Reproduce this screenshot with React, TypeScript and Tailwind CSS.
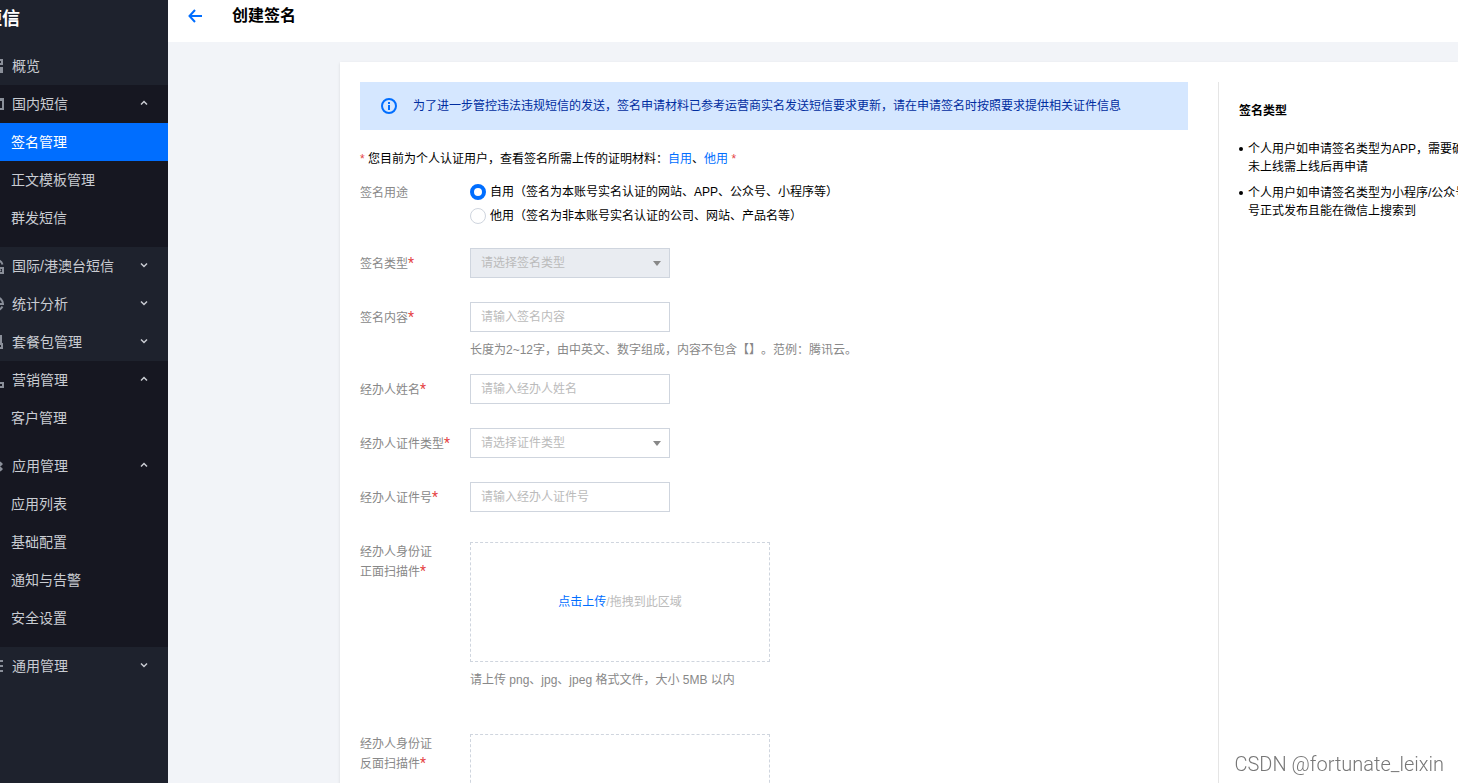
import React from 'react';

type IconName =
  | 'overview'
  | 'mail'
  | 'global'
  | 'stats'
  | 'package'
  | 'marketing'
  | 'apps'
  | 'list';

interface MenuItem {
  label: string;
  icon: IconName;
  expandable?: boolean;
  children?: { label: string; active?: boolean }[];
}

const menu: MenuItem[] = [
  { label: '概览', icon: 'overview' },
  {
    label: '国内短信',
    icon: 'mail',
    expandable: true,
    children: [
      { label: '签名管理', active: true },
      { label: '正文模板管理' },
      { label: '群发短信' },
    ],
  },
  { label: '国际/港澳台短信', icon: 'global', expandable: true },
  { label: '统计分析', icon: 'stats', expandable: true },
  { label: '套餐包管理', icon: 'package', expandable: true },
  {
    label: '营销管理',
    icon: 'marketing',
    expandable: true,
    children: [{ label: '客户管理' }],
  },
  {
    label: '应用管理',
    icon: 'apps',
    expandable: true,
    children: [
      { label: '应用列表' },
      { label: '基础配置' },
      { label: '通知与告警' },
      { label: '安全设置' },
    ],
  },
  { label: '通用管理', icon: 'list', expandable: true },
];

const iconShapes: Record<IconName, React.ReactNode> = {
  overview: (
    <>
      <path d="M2 2h4v4H2zM10 2h4v4h-4z" />
      <path d="M1 9h6v6H1zM9 9h6v6H9z" fill="currentColor" stroke="none" />
    </>
  ),
  mail: (
    <>
      <path d="M1 3h14v10H1z" />
      <path d="M1 4h14M5 8h7" />
    </>
  ),
  global: (
    <>
      <path d="M5 14A6.500 6.500 0 1 1 14.500 6.500M2 8h3" />
      <path d="M7 10h8v5H7zM9 12l2 1 2-1" />
    </>
  ),
  stats: <path d="M8 8h7A6.500 6.500 0 1 0 8 14.500c3 0 5-1.500 6.500-4" />,
  package: <path d="M2 1v7h11V1M2 11h4v4H2zM10 10h4v4h-4z" />,
  marketing: <path d="M2 2h5v5H2zM2 11h5v4H2zM10 11h5v4h-5z" />,
  apps: (
    <path
      d="M4 3l3 3-3 3-3-3zM12.500 3.500L15 6l-2.500 2.500L10 6zM12.500 8.500L15 11l-2.500 2.500L10 11zM4 9l3 3-3 3-3-3z"
      fill="currentColor"
      stroke="none"
    />
  ),
  list: <path d="M1 3h14M1 8h14M1 13h14" />,
};

const MenuIcon: React.FC<{ name: IconName }> = ({ name }) => (
  <svg
    viewBox="0 0 16 16"
    className="h-4 w-4 shrink-0 text-[#8a8f99]"
    fill="none"
    stroke="currentColor"
    strokeWidth="2"
  >
    {iconShapes[name]}
  </svg>
);

const Chevron: React.FC<{ open: boolean }> = ({ open }) => (
  <svg
    viewBox="0 0 8 8"
    className="mr-5 mb-0.5 ml-auto h-2 w-2 text-[#c9ccd2]"
    fill="none"
    stroke="currentColor"
    strokeWidth="1.5"
  >
    <path d={open ? 'M1 5.500L4 2.500l3 3' : 'M1 2.500L4 5.500l3-3'} />
  </svg>
);

const Sidebar: React.FC = () => (
  <aside className="w-[168px] shrink-0 overflow-hidden bg-[#1e222d]">
    <h2 className="-ml-4 pt-[5px] pb-3.5 text-lg leading-7 font-bold text-white">短信</h2>
    <nav className="text-sm text-[#c9ccd2]">
      {menu.map((item) => (
        <div key={item.label} className={item.children ? 'bg-[#161721] pb-2.5' : ''}>
          <button
            type="button"
            aria-expanded={item.expandable ? Boolean(item.children) : undefined}
            className="flex h-[38px] w-full items-center"
          >
            <span className="-ml-3 flex items-center gap-2">
              <MenuIcon name={item.icon} />
              {item.label}
            </span>
            {item.expandable && <Chevron open={Boolean(item.children)} />}
          </button>
          {item.children?.map((child) => (
            <a
              key={child.label}
              href="#"
              className={
                child.active
                  ? 'flex h-[38px] items-center bg-[#006eff] pl-[11px] text-white'
                  : 'flex h-[38px] items-center pl-[11px]'
              }
            >
              {child.label}
            </a>
          ))}
        </div>
      ))}
    </nav>
  </aside>
);

const Required: React.FC = () => (
  <span className="font-['Roboto',sans-serif] text-sm leading-none text-[#e54545]">*</span>
);

interface FormRowProps {
  label: React.ReactNode;
  htmlFor: string;
  hint?: string;
  children: React.ReactNode;
}

const FormRow: React.FC<FormRowProps> = ({ label, htmlFor, hint, children }) => (
  <div className={hint ? 'mb-3.5 flex' : 'mb-6 flex'}>
    <label htmlFor={htmlFor} className="h-[30px] w-[110px] shrink-0 leading-8 text-[#888]">
      {label}
      <Required />
    </label>
    <div>
      {children}
      {hint && <p className="mt-2 leading-5 text-[#888] [text-spacing-trim:space-all]">{hint}</p>}
    </div>
  </div>
);

const TextField: React.FC<{ id: string; placeholder: string }> = ({ id, placeholder }) => (
  <input
    id={id}
    type="text"
    placeholder={placeholder}
    className="block h-[30px] w-[200px] border border-[#cfd5de] bg-white px-2.5 placeholder:text-[#bbb]"
  />
);

const SelectField: React.FC<{ id: string; placeholder: string; disabled?: boolean }> = ({
  id,
  placeholder,
  disabled = false,
}) => (
  <div className="relative w-[200px]">
    <select
      id={id}
      disabled={disabled}
      className="block h-[30px] w-full appearance-none border border-[#cfd5de] bg-white px-2.5 text-[#bbb] disabled:bg-[#e9ecf1] disabled:opacity-100"
    >
      <option>{placeholder}</option>
    </select>
    <svg
      viewBox="0 0 8 5"
      className="pointer-events-none absolute top-[13px] right-[9px] h-[5px] w-2"
      fill="#888"
    >
      <path d="M0 0h8L4 5z" />
    </svg>
  </div>
);

interface UploadRowProps {
  id: string;
  side: string;
}

const UploadRow: React.FC<UploadRowProps> = ({ id, side }) => (
  <div className="flex pt-1.5 pb-[38px]">
    <label htmlFor={id} className="w-[110px] shrink-0 leading-5 text-[#888]">
      经办人身份证
      <br />
      {side}扫描件
      <Required />
    </label>
    <div>
      <div className="flex h-[120px] w-[300px] items-center justify-center border border-dashed border-[#cfd5de] text-[#bbb]">
        <button id={id} type="button" className="text-[#006eff]">
          点击上传
        </button>
        /拖拽到此区域
      </div>
      <p className="mt-2 leading-5 text-[#888]">请上传 png、jpg、jpeg 格式文件，大小 5MB 以内</p>
    </div>
  </div>
);

const radioClass =
  'h-4 w-4 appearance-none rounded-full border border-[#cfd5de] bg-white checked:border-4 checked:border-[#006eff]';

const SignatureForm: React.FC = () => (
  <form className="w-[828px] shrink-0">
    <div className="flex h-12 items-center gap-4 bg-[#d5e7ff] pl-[21px] text-[#002da0]">
      <svg viewBox="0 0 16 16" className="h-4 w-4" fill="none" stroke="#006eff" strokeWidth="2">
        <circle cx="8" cy="8" r="7" />
        <path d="M8 7v5M8 4v2" />
      </svg>
      为了进一步管控违法违规短信的发送，签名申请材料已参考运营商实名发送短信要求更新，请在申请签名时按照要求提供相关证件信息
    </div>
    <p className="mt-5 leading-[18px]">
      <span className="text-[#e54545]">*</span> 您目前为个人认证用户，查看签名所需上传的证明材料：
      <a href="#" className="text-[#006eff]">
        自用
      </a>
      、
      <a href="#" className="text-[#006eff]">
        他用
      </a>{' '}
      <span className="text-[#e54545]">*</span>
    </p>
    <fieldset className="mt-3 mb-5 flex">
      <legend className="float-left w-[110px] leading-[26px] text-[#888]">签名用途</legend>
      <div>
        <label className="flex h-6 items-center gap-1">
          <input type="radio" name="purpose" defaultChecked className={radioClass} />
          自用（签名为本账号实名认证的网站、APP、公众号、小程序等）
        </label>
        <label className="flex h-6 items-center gap-1">
          <input type="radio" name="purpose" className={radioClass} />
          他用（签名为非本账号实名认证的公司、网站、产品名等）
        </label>
      </div>
    </fieldset>
    <FormRow label="签名类型" htmlFor="sign-type">
      <SelectField id="sign-type" placeholder="请选择签名类型" disabled />
    </FormRow>
    <FormRow
      label="签名内容"
      htmlFor="sign-content"
      hint="长度为2~12字，由中英文、数字组成，内容不包含【】。范例：腾讯云。"
    >
      <TextField id="sign-content" placeholder="请输入签名内容" />
    </FormRow>
    <FormRow label="经办人姓名" htmlFor="agent-name">
      <TextField id="agent-name" placeholder="请输入经办人姓名" />
    </FormRow>
    <FormRow label="经办人证件类型" htmlFor="id-type">
      <SelectField id="id-type" placeholder="请选择证件类型" />
    </FormRow>
    <FormRow label="经办人证件号" htmlFor="id-number">
      <TextField id="id-number" placeholder="请输入经办人证件号" />
    </FormRow>
    <UploadRow id="id-front" side="正面" />
    <UploadRow id="id-back" side="反面" />
  </form>
);

const tips = [
  ['个人用户如申请签名类型为APP，需要确', '未上线需上线后再申请'],
  ['个人用户如申请签名类型为小程序/公众号', '号正式发布且能在微信上搜索到'],
];

const TipsPanel: React.FC = () => (
  <aside className="ml-[30px] min-w-0 flex-1 overflow-hidden border-l border-[#e5e5e5] pt-5 pl-5 leading-[18px] whitespace-nowrap">
    <h3 className="mb-5 font-bold">签名类型</h3>
    <ul className="flex flex-col gap-2">
      {tips.map(([first, second]) => (
        <li key={first} className="flex gap-[5px]">
          <span className="mt-[7px] h-1 w-1 shrink-0 rounded-full bg-black" />
          <span>
            {first}
            <br />
            {second}
          </span>
        </li>
      ))}
    </ul>
  </aside>
);

export default function App() {
  return (
    <div className="flex h-screen overflow-hidden bg-[#f2f4f8] font-['Liberation_Sans','Noto_Sans_CJK_SC',sans-serif] text-xs text-black">
      <Sidebar />
      <div className="flex min-w-0 flex-1 flex-col">
        <header className="flex h-[42px] shrink-0 items-center bg-white pb-2.5 pl-5">
          <button type="button" aria-label="返回" className="mr-[30px]">
            <svg
              viewBox="0 0 14 14"
              className="h-3.5 w-3.5"
              fill="none"
              stroke="#006eff"
              strokeWidth="2"
            >
              <path d="M14 7H1.500M7 1L1.500 7 7 13" />
            </svg>
          </button>
          <h1 className="text-base font-bold">创建签名</h1>
        </header>
        <main className="flex min-h-0 flex-1 overflow-y-auto pt-5 pl-[172px] [scrollbar-width:none]">
          <div className="flex h-max min-w-0 flex-1 bg-white pt-5 pl-5 shadow">
            <SignatureForm />
            <TipsPanel />
          </div>
        </main>
      </div>
      <div className="pointer-events-none fixed right-3.5 bottom-[5px] font-['Roboto',sans-serif] text-xl leading-7 font-light text-[#777]">
        CSDN @fortunate_leixin
      </div>
    </div>
  );
}
